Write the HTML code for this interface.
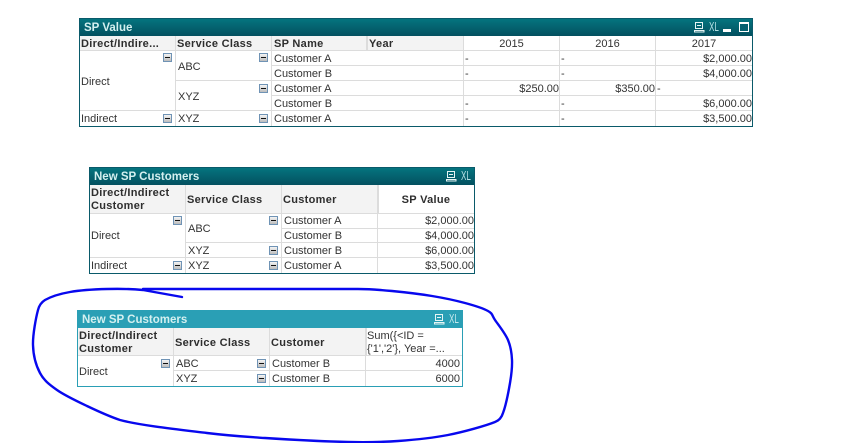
<!DOCTYPE html>
<html><head><meta charset="utf-8">
<style>
html,body{margin:0;padding:0;background:#fff;width:841px;height:443px;overflow:hidden}
body{position:relative;font-family:"Liberation Sans",sans-serif;font-size:11px;color:#333}
.b{position:absolute;box-sizing:border-box}
.t{position:absolute;white-space:nowrap;line-height:13px;color:#333;margin-top:1px}
.h{font-weight:bold;font-size:11px;letter-spacing:.3px;color:#2e2e2e}
.r{text-align:right}
.c{text-align:center}
.ti{position:absolute;white-space:nowrap;font-weight:bold;font-size:11.5px;line-height:14px;color:#d4f0f0}
.l{position:absolute;background:#dcdcdc}
.g{position:absolute;background:#f3f3f3}
.m{position:absolute;width:9px;height:9px;box-sizing:border-box;border:1px solid #6f93b5;background:linear-gradient(#f4f4f4,#bcbcbc)}
.m:after{content:"";position:absolute;left:1px;right:1px;top:3px;height:1px;background:#111}
svg.i{position:absolute}
.x{position:absolute;white-space:nowrap;font-size:13px;line-height:14px;color:#b4e0e4;transform:scaleX(.62);transform-origin:left}
</style></head><body>

<!-- Table 1 -->
<div class="b" style="left:79px;top:18px;width:674px;height:109px;border:1px solid #0a5a6a"></div>
<div class="b" style="left:80px;top:19px;width:672px;height:17px;background:linear-gradient(#04747f,#03505f)"></div>
<div class="ti" style="left:84px;top:21px">SP Value</div>
<div class="g" style="left:80px;top:36px;width:384px;height:14px"></div>
<div class="l" style="left:175px;top:36px;width:1px;height:90px"></div>
<div class="l" style="left:271px;top:36px;width:1px;height:90px"></div>
<div class="l" style="left:366px;top:36px;width:2px;height:14px"></div>
<div class="l" style="left:463px;top:36px;width:1px;height:90px"></div>
<div class="l" style="left:559px;top:36px;width:1px;height:90px"></div>
<div class="l" style="left:655px;top:36px;width:1px;height:90px"></div>
<div class="l" style="left:80px;top:50px;width:672px;height:1px"></div>
<div class="l" style="left:272px;top:65px;width:480px;height:1px"></div>
<div class="l" style="left:176px;top:80px;width:576px;height:1px"></div>
<div class="l" style="left:272px;top:95px;width:480px;height:1px"></div>
<div class="l" style="left:80px;top:110px;width:672px;height:1px"></div>
<div class="t h" style="left:81px;top:37px">Direct/Indire...</div>
<div class="t h" style="left:177px;top:37px">Service Class</div>
<div class="t h" style="left:274px;top:37px">SP Name</div>
<div class="t h" style="left:369px;top:37px">Year</div>
<div class="t c" style="left:464px;top:37px;width:95px">2015</div>
<div class="t c" style="left:560px;top:37px;width:95px">2016</div>
<div class="t c" style="left:656px;top:37px;width:96px">2017</div>
<div class="m" style="left:163px;top:53px"></div>
<div class="m" style="left:259px;top:53px"></div>
<div class="m" style="left:259px;top:84px"></div>
<div class="m" style="left:163px;top:114px"></div>
<div class="m" style="left:259px;top:114px"></div>
<div class="t" style="left:81px;top:75px">Direct</div>
<div class="t" style="left:81px;top:112px">Indirect</div>
<div class="t" style="left:178px;top:60px">ABC</div>
<div class="t" style="left:178px;top:90px">XYZ</div>
<div class="t" style="left:178px;top:112px">XYZ</div>
<div class="t" style="left:274px;top:52px">Customer A</div>
<div class="t" style="left:274px;top:67px">Customer B</div>
<div class="t" style="left:274px;top:82px">Customer A</div>
<div class="t" style="left:274px;top:97px">Customer B</div>
<div class="t" style="left:274px;top:112px">Customer A</div>
<div class="t" style="left:465px;top:52px">-</div><div class="t" style="left:561px;top:52px">-</div>
<div class="t" style="left:465px;top:67px">-</div><div class="t" style="left:561px;top:67px">-</div>
<div class="t r" style="left:464px;top:82px;width:95px">$250.00</div>
<div class="t r" style="left:560px;top:82px;width:95px">$350.00</div>
<div class="t" style="left:657px;top:82px">-</div>
<div class="t" style="left:465px;top:97px">-</div><div class="t" style="left:561px;top:97px">-</div>
<div class="t" style="left:465px;top:112px">-</div><div class="t" style="left:561px;top:112px">-</div>
<div class="t r" style="left:656px;top:52px;width:96px">$2,000.00</div>
<div class="t r" style="left:656px;top:67px;width:96px">$4,000.00</div>
<div class="t r" style="left:656px;top:97px;width:96px">$6,000.00</div>
<div class="t r" style="left:656px;top:112px;width:96px">$3,500.00</div>
<svg class="i" style="left:693px;top:21px" width="58" height="13" viewBox="0 0 58 13">
<path d="M2.500 1.500h7v6h-7zM4 4.500h4M1.500 9.500h9.500v1.500H1.500z" fill="none" stroke="#e6f4f4" stroke-width="1"/>
<path d="M30 8h8v3h-8z" fill="#fff"/>
<path d="M46.500 1.500h9v9h-9z" fill="#04606f" stroke="#fff" stroke-width="1"/><path d="M46 1h10v2H46z" fill="#fff"/>
</svg>
<div class="x" style="left:709px;top:20px">XL</div>

<!-- Table 2 -->
<div class="b" style="left:89px;top:167px;width:386px;height:107px;border:1px solid #0a5a6a"></div>
<div class="b" style="left:90px;top:168px;width:384px;height:17px;background:linear-gradient(#04747f,#03505f)"></div>
<div class="ti" style="left:94px;top:170px">New SP Customers</div>
<div class="g" style="left:90px;top:185px;width:287px;height:28px"></div>
<div class="l" style="left:185px;top:185px;width:1px;height:88px"></div>
<div class="l" style="left:281px;top:185px;width:1px;height:88px"></div>
<div class="l" style="left:377px;top:185px;width:2px;height:28px"></div>
<div class="l" style="left:377px;top:213px;width:1px;height:60px"></div>
<div class="l" style="left:90px;top:213px;width:384px;height:1px"></div>
<div class="l" style="left:282px;top:228px;width:192px;height:1px"></div>
<div class="l" style="left:186px;top:242px;width:288px;height:1px"></div>
<div class="l" style="left:90px;top:257px;width:384px;height:1px"></div>
<div class="t h" style="left:91px;top:186px">Direct/Indirect</div>
<div class="t h" style="left:91px;top:199px">Customer</div>
<div class="t h" style="left:187px;top:193px">Service Class</div>
<div class="t h" style="left:283px;top:193px">Customer</div>
<div class="t h c" style="left:378px;top:193px;width:96px">SP Value</div>
<div class="m" style="left:173px;top:216px"></div>
<div class="m" style="left:269px;top:216px"></div>
<div class="m" style="left:269px;top:246px"></div>
<div class="m" style="left:173px;top:261px"></div>
<div class="m" style="left:269px;top:261px"></div>
<div class="t" style="left:91px;top:229px">Direct</div>
<div class="t" style="left:91px;top:259px">Indirect</div>
<div class="t" style="left:188px;top:222px">ABC</div>
<div class="t" style="left:188px;top:244px">XYZ</div>
<div class="t" style="left:188px;top:259px">XYZ</div>
<div class="t" style="left:284px;top:214px">Customer A</div>
<div class="t" style="left:284px;top:229px">Customer B</div>
<div class="t" style="left:284px;top:244px">Customer B</div>
<div class="t" style="left:284px;top:259px">Customer A</div>
<div class="t r" style="left:378px;top:214px;width:96px">$2,000.00</div>
<div class="t r" style="left:378px;top:229px;width:96px">$4,000.00</div>
<div class="t r" style="left:378px;top:244px;width:96px">$6,000.00</div>
<div class="t r" style="left:378px;top:259px;width:96px">$3,500.00</div>
<svg class="i" style="left:445px;top:170px" width="14" height="13" viewBox="0 0 14 13">
<path d="M2.500 1.500h7v6h-7zM4 4.500h4M1.500 9.500h9.500v1.500H1.500z" fill="none" stroke="#e6f4f4" stroke-width="1"/></svg>
<div class="x" style="left:461px;top:169px">XL</div>

<!-- Table 3 -->
<div class="b" style="left:77px;top:310px;width:386px;height:77px;border:1px solid #2a9fb5"></div>
<div class="b" style="left:78px;top:311px;width:384px;height:17px;background:#2a9fb5"></div>
<div class="ti" style="left:82px;top:313px">New SP Customers</div>
<div class="g" style="left:78px;top:328px;width:287px;height:28px"></div>
<div class="l" style="left:173px;top:328px;width:1px;height:58px"></div>
<div class="l" style="left:269px;top:328px;width:1px;height:58px"></div>
<div class="l" style="left:365px;top:328px;width:2px;height:28px"></div>
<div class="l" style="left:365px;top:356px;width:1px;height:30px"></div>
<div class="l" style="left:78px;top:355px;width:384px;height:1px"></div>
<div class="l" style="left:174px;top:370px;width:288px;height:1px"></div>
<div class="t h" style="left:79px;top:329px">Direct/Indirect</div>
<div class="t h" style="left:79px;top:342px">Customer</div>
<div class="t h" style="left:175px;top:336px">Service Class</div>
<div class="t h" style="left:271px;top:336px">Customer</div>
<div class="t" style="left:367px;top:329px">Sum({&lt;ID =</div>
<div class="t" style="left:367px;top:342px">{'1','2'}, Year =...</div>
<div class="m" style="left:161px;top:359px"></div>
<div class="m" style="left:257px;top:359px"></div>
<div class="m" style="left:257px;top:374px"></div>
<div class="t" style="left:79px;top:365px">Direct</div>
<div class="t" style="left:176px;top:357px">ABC</div>
<div class="t" style="left:176px;top:372px">XYZ</div>
<div class="t" style="left:272px;top:357px">Customer B</div>
<div class="t" style="left:272px;top:372px">Customer B</div>
<div class="t r" style="left:366px;top:357px;width:94px">4000</div>
<div class="t r" style="left:366px;top:372px;width:94px">6000</div>
<svg class="i" style="left:433px;top:313px" width="14" height="13" viewBox="0 0 14 13">
<path d="M2.500 1.500h7v6h-7zM4 4.500h4M1.500 9.500h9.500v1.500H1.500z" fill="none" stroke="#e6f4f4" stroke-width="1"/></svg>
<div class="x" style="left:449px;top:312px;color:#c4e8ec">XL</div>

<!-- Blue stroke -->
<svg class="i" style="left:0;top:0" width="841" height="443" viewBox="0 0 841 443">
<path d="M182 297 L143 290 C130.500 288.700 119.200 288.700 107 289 C94.800 289.300 80.300 290.200 70 292 C59.700 293.800 50.300 297 45 300 C41 302.500 39 306 38 310 C36 317.500 32.700 334.500 33 345 C33.300 355.500 36 365.500 40 373 C44 380.500 49.200 384.500 57 390 C64.800 395.500 76.500 401 87 406 C97.500 411 108 416 120 420 C140 425.500 182.500 430 207 433 C231.500 436 241.500 436.500 265 438 C288.500 439.500 325.800 441.500 348 442 C370.200 442.500 381.300 442.200 398 441 C414.700 439.800 431.800 438.200 448 435 C464.200 431.800 485.800 425.700 495 422 C499 420.500 501.500 418 503 413 C505.500 406.500 508.500 391.800 510 383 C511.500 374.200 512.300 367.200 512 360 C511.700 352.800 510.800 346.700 508 340 C505.200 333.300 498.300 324.800 495 320 C491.700 315.200 493 313.800 488 311 C483 308.200 474.300 305.500 465 303 C455.700 300.500 444.200 298 432 296 C419.800 294 404.300 292.200 392 291 C379.700 289.800 370 289 358 289 L143 289" fill="none" stroke="#0808ee" stroke-width="2.400" stroke-linejoin="round" stroke-linecap="round"/>
</svg>
</body></html>
